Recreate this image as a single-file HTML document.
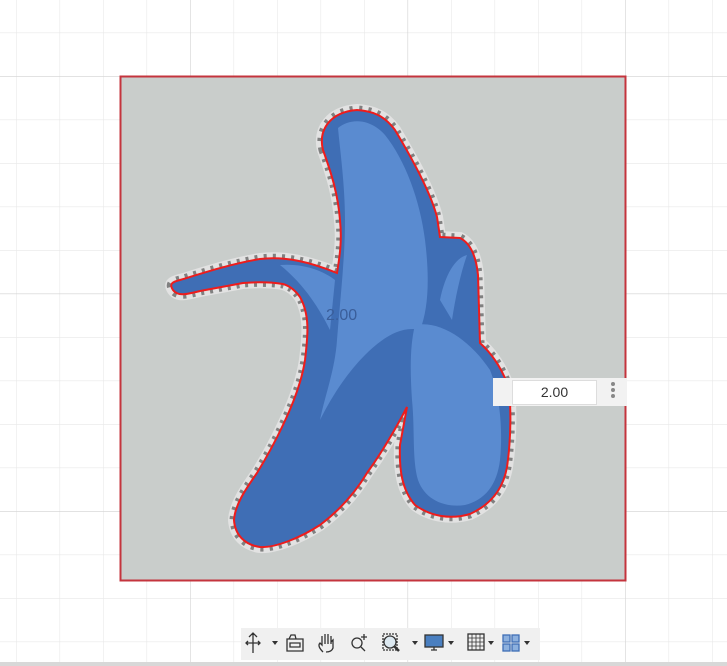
<!DOCTYPE html>
<html><head><meta charset="utf-8"><style>
html,body{margin:0;padding:0;width:727px;height:666px;overflow:hidden;background:#fff;font-family:"Liberation Sans",sans-serif}
</style></head><body>
<svg width="727" height="666" style="position:absolute;left:0;top:0">
<defs>
<pattern id="minor" x="16" y="32.5" width="43.5" height="43.5" patternUnits="userSpaceOnUse">
<path d="M0 0V43.5M0 0H43.5" stroke="#e8e8e8" stroke-width="1.2" fill="none"/>
</pattern>
<pattern id="major" x="190" y="76" width="217.5" height="217.5" patternUnits="userSpaceOnUse">
<path d="M0 0V217.5M0 0H217.5" stroke="#d3d3d3" stroke-width="1.2" fill="none"/>
</pattern>
<path id="outline" d="M323 150 C318 130 330 112 357 110 C372 111 384 115 395 130 C410 155 430 190 437 217 L440 237 L460 238 C470 243 476 255 478 275 L480 343 C490 352 500 365 507 383 C512 400 511 440 507 467 C503 490 490 505 470 514 C450 520 430 516 415 505 C402 490 399 470 400 445 L407 407 C395 430 380 455 367 473 C355 493 340 510 320 525 C300 538 275 548 260 547 C245 545 235 535 234 520 C235 505 245 490 257 473 C268 455 276 440 283 425 C295 400 302 380 305 360 C308 335 310 315 300 297 C295 290 290 286 283 284 C270 282 255 282 243 283 L200 291 C188 294 178 297 173 290 C169 284 172 282 180 280 C200 274 230 264 260 259 C285 256 310 262 337 273 C340 255 342 240 340 220 C338 195 332 175 323 150 Z"/>
</defs>
<rect width="727" height="666" fill="url(#minor)"/>
<rect width="727" height="666" fill="url(#major)"/>
<rect x="0" y="662" width="727" height="4" fill="#d8d8d8"/>
<rect x="120.5" y="76.5" width="505" height="504" fill="#c9cdcb" stroke="#c4343d" stroke-width="2"/>
<use href="#outline" fill="none" stroke="#e2e2e2" stroke-width="12"/>
<use href="#outline" fill="none" stroke="#808080" stroke-width="9" stroke-dasharray="3 6"/>
<use href="#outline" fill="#3f6eb5"/>
<path d="M338 128 C350 118 370 118 385 135 C405 160 420 200 425 240 C430 280 428 310 420 330 C400 325 380 340 365 355 C345 375 330 400 320 420 C325 395 335 370 337 340 C340 300 345 260 345 220 C345 185 340 150 338 128 Z" fill="#5a8bd0"/>
<path d="M415 325 C440 320 470 340 490 370 C500 395 503 430 500 460 C497 485 485 500 465 505 C445 508 425 500 418 480 C412 460 415 430 412 400 C410 370 410 345 415 325 Z" fill="#5a8bd0"/>
<path d="M280 265 C305 263 325 272 335 280 L330 330 C320 310 305 285 280 265 Z" fill="#5a8bd0"/>
<path d="M440 300 C445 275 455 258 467 255 C460 275 455 300 452 320 Z" fill="#5a8bd0"/>
<use href="#outline" fill="none" stroke="#ee1c1c" stroke-width="2"/>
<text x="326" y="320" font-size="16" fill="#3a5e9a" font-family="Liberation Sans">2.00</text>
</svg>
<div style="position:absolute;left:493px;top:378px;width:134px;height:28px;background:#f2f2f2"></div>
<div style="position:absolute;left:512px;top:380px;width:83px;height:23px;background:#fff;border:1px solid #ddd;font-size:14px;text-align:center;line-height:23px;color:#333">2.00</div>
<div style="position:absolute;left:611px;top:382px;width:4px;font-size:0">
<div style="width:4px;height:4px;border-radius:2px;background:#888;margin-bottom:2px"></div>
<div style="width:4px;height:4px;border-radius:2px;background:#888;margin-bottom:2px"></div>
<div style="width:4px;height:4px;border-radius:2px;background:#888"></div></div>
<div style="position:absolute;left:241px;top:628px;width:299px;height:32px;background:#f0f0f0"></div>
<svg width="300" height="32" style="position:absolute;left:241px;top:628px">
<g stroke="#333" fill="none" stroke-width="1.3">
<path d="M12 5V25M8 9L12 5L16 9M5 15H19M7 13L5 15L7 17M17 13L19 15L17 17"/>
<path d="M46 11H62V23H46Z M49 15H59V19H49Z M48 11L50 7H54L55 11"/>
<path d="M82 24C78 20 77 17 79 15L81 17V8M84 16V6M87 16V6M90 16V8M90 14L92 12V20C91 23 88 24 85 24"/>
<circle cx="116" cy="15" r="5"/><path d="M120 19L124 23M123 6V12M120 9H126"/>
<rect x="142" y="6" width="14" height="16" stroke-dasharray="2 1"/><circle cx="149" cy="14" r="6" fill="#dce8f0"/><path d="M153 18L158 23" stroke-width="2.5"/>
<rect x="184" y="7" width="18" height="12" fill="#4a7fc0"/><path d="M190 22H196M193 19V22"/>
<rect x="227" y="6" width="16" height="16"/><path d="M231 6V22M235 6V22M239 6V22M227 10H243M227 14H243M227 18H243" stroke-width=".8"/>
<rect x="262" y="7" width="7" height="7" fill="#8cb0de" stroke="#3f6eb5"/><rect x="271" y="7" width="7" height="7" fill="#8cb0de" stroke="#3f6eb5"/><rect x="262" y="16" width="7" height="7" fill="#8cb0de" stroke="#3f6eb5"/><rect x="271" y="16" width="7" height="7" fill="#8cb0de" stroke="#3f6eb5"/>
</g>
<g fill="#333"><path d="M31 13H37L34 17Z"/><path d="M171 13H177L174 17Z"/><path d="M207 13H213L210 17Z"/><path d="M247 13H253L250 17Z"/><path d="M283 13H289L286 17Z"/></g>
</svg>
</body></html>
